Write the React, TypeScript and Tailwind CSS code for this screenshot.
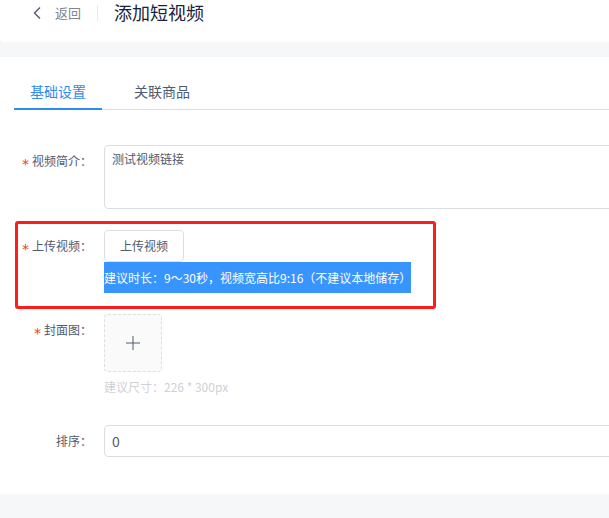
import type { ReactNode } from 'react'

const font = "font-['Noto_Sans_CJK_SC','Noto_Sans',sans-serif]"

function Label({ children, required }: { children: ReactNode; required?: boolean }) {
  return (
    <div className="w-[104px] shrink-0 pr-[12px] pt-[10px] text-right text-[12px] leading-[12px] text-[#515a6e]">
      {required && (
        <span className="relative top-[3px] mr-[3px] font-['DejaVu_Sans',sans-serif] text-[14px] leading-[12px] text-[#ed4014]">*</span>
      )}
      {children}
    </div>
  )
}

export default function App() {
  return (
    <div className={`relative h-[518px] w-[609px] overflow-hidden bg-[#f5f7f9] ${font}`}>
      {/* header */}
      <div className="h-[42px] rounded-bl-[4px] bg-white">
        <div className="flex h-[25px] items-center pl-[33px]">
          <svg width="8" height="12" viewBox="0 0 8 12" className="text-[#515a6e]">
            <polyline points="7,0.5 1.5,6 7,11.5" fill="none" stroke="currentColor" strokeWidth="1.4" />
          </svg>
          <span className="ml-[14px] text-[13px] text-[#808695]">返回</span>
          <span className="ml-[16px] h-[16px] w-px bg-[#e8eaec]" />
          <span className="ml-[16px] text-[18px] leading-[25px] text-[#17233d]">添加短视频</span>
        </div>
      </div>

      {/* content */}
      <div className="mt-[15px] h-[437px] bg-white">
        <div className="pt-[16px]">
          <div className="ml-[14px] flex border-b border-[#dcdee2] text-[14px] leading-[20px]">
            <div className="relative px-[16px] pt-[8px] pb-[8px] text-[#2d8cf0]">
              基础设置
              <span className="absolute bottom-[-1px] left-0 h-[2px] w-full bg-[#2d8cf0]" />
            </div>
            <div className="ml-[16px] px-[16px] pt-[8px] pb-[8px] text-[#515a6e]">关联商品</div>
          </div>
        </div>

        <div className="mt-[35px] flex">
          <Label required>视频简介：</Label>
          <div className="h-[64px] w-[560px] shrink-0 rounded-[4px] border border-[#dcdee2] px-[7px] py-[4px] text-[12px] leading-[18px] text-[#515a6e]">
            测试视频链接
          </div>
        </div>

        <div className="mt-[21px] flex">
          <Label required>上传视频：</Label>
          <div className="flex flex-col items-start">
            <div className="flex h-[32px] w-[80px] items-center justify-center rounded-[4px] border border-[#dcdee2] text-[12px] text-[#515a6e]">
              上传视频
            </div>
            <div className="bg-[#3894fe] text-[12px] leading-[31px] whitespace-nowrap text-white">
              建议时长：9～30秒，视频宽高比9:16（不建议本地储存）
            </div>
          </div>
        </div>

        <div className="mt-[21px] flex">
          <Label required>封面图：</Label>
          <div className="flex flex-col items-start">
            <div className="flex h-[58px] w-[58px] items-center justify-center rounded-[4px] border border-dashed border-[#dcdee2] bg-[#fafafa]">
              <svg width="14" height="14" viewBox="0 0 14 14" className="text-[#515a6e]">
                <path d="M7 0v14M0 7h14" stroke="currentColor" strokeWidth="1" fill="none" />
              </svg>
            </div>
            <div className="mt-[5px] text-[12px] leading-[20px] text-[#cfd1d6]">建议尺寸：226 * 300px</div>
          </div>
        </div>

        <div className="mt-[28px] flex">
          <Label>排序：</Label>
          <div className="flex h-[32px] w-[560px] shrink-0 items-center rounded-[4px] border border-[#dcdee2] px-[7px] text-[14px] text-[#515a6e]">
            0
          </div>
        </div>
      </div>

      {/* annotation */}
      <div className="pointer-events-none absolute top-[221px] left-[15px] h-[88px] w-[421px] rounded-[3px] border-[3px] border-[#ff1c1c]" />
    </div>
  )
}
